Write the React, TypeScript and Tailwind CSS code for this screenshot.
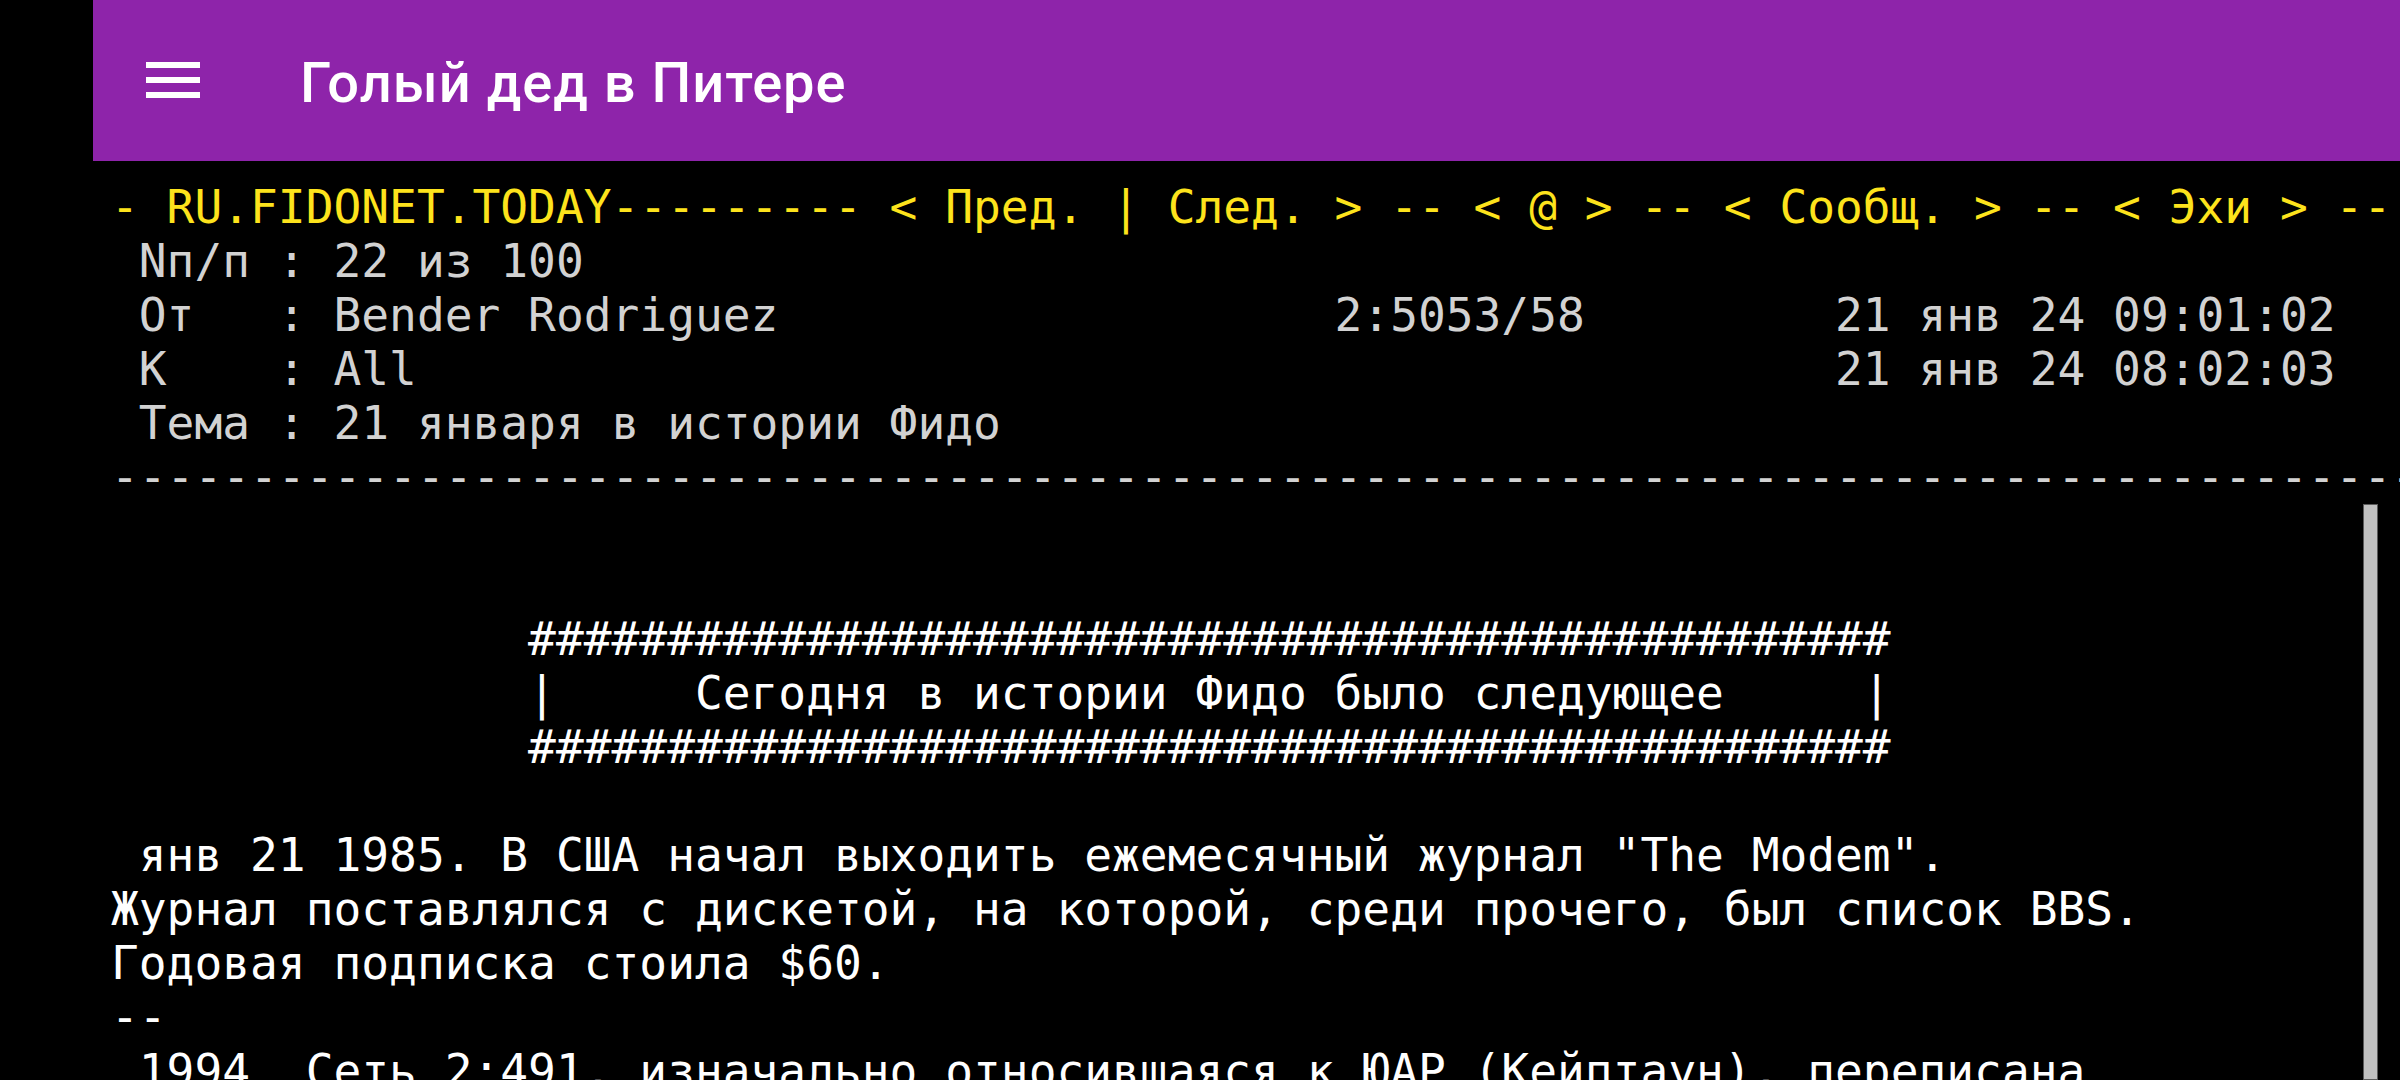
const mono = "font-['DejaVu_Sans_Mono','Liberation_Mono',monospace] text-[46.2px] leading-[54px] whitespace-pre";

const headerLines = [
  ' Nп/п : 22 из 100',
  ' От   : Bender Rodriguez' + ' '.repeat(20) + '2:5053/58' + ' '.repeat(9) + '21 янв 24 09:01:02',
  ' К    : All' + ' '.repeat(51) + '21 янв 24 08:02:03',
  ' Тема : 21 января в истории Фидо',
];

const hashes = ' '.repeat(15) + '#'.repeat(49);

const bodyLines = [
  '',
  '',
  hashes,
  ' '.repeat(15) + '|     Сегодня в истории Фидо было следующее     |',
  hashes,
  '',
  ' янв 21 1985. В США начал выходить ежемесячный журнал "The Modem".',
  'Журнал поставлялся с дискетой, на которой, среди прочего, был список BBS.',
  'Годовая подписка стоила $60.',
  '--',
  ' 1994. Сеть 2:491, изначально относившаяся к ЮАР (Кейптаун), переписана',
];

const MenuIcon = () => (
  <svg viewBox="0 0 24 24" className="w-[72px] h-[72px] shrink-0" fill="white">
    <path d="M3 18h18v-2H3v2zm0-5h18v-2H3v2zm0-7v2h18V6H3z" />
  </svg>
);

const App = () => {
  return (
    <div className="flex h-[1080px] w-full bg-black overflow-hidden">
      <div className="w-[93px] shrink-0 bg-black" />
      <div className="flex flex-1 flex-col min-w-0">
        <div className="flex h-[161px] shrink-0 items-center bg-[#8e24aa] pl-[44px]">
          <div className="mt-[-1px]">
            <MenuIcon />
          </div>
          <div className="ml-[91px] mt-[5px] font-['Roboto',sans-serif] text-[56px] font-medium leading-[64px] tracking-[1px] text-white">
            Голый дед в Питере
          </div>
        </div>
        <div className={`pt-[19px] pl-[18px] overflow-hidden ${mono}`}>
          <div className="text-[#fde31c]">
            {'- RU.FIDONET.TODAY--------- < Пред. | След. > -- < @ > -- < Сообщ. > -- < Эхи > --'}
          </div>
          {headerLines.map((line, i) => (
            <div key={i} className="text-[#d2d2d2]">
              {line}
            </div>
          ))}
          <div className="text-[#d2d2d2]">{'-'.repeat(90)}</div>
        </div>
        <div className={`relative flex-1 overflow-hidden pl-[18px] text-white ${mono}`}>
          {bodyLines.map((line, i) => (
            <div key={i} className="h-[54px]">
              {line}
            </div>
          ))}
          <div className="absolute top-0 bottom-0 right-[22px] w-[15px] bg-[#c0c0c0] border border-[#5a5a5a]" />
        </div>
      </div>
    </div>
  );
};

export default App;
